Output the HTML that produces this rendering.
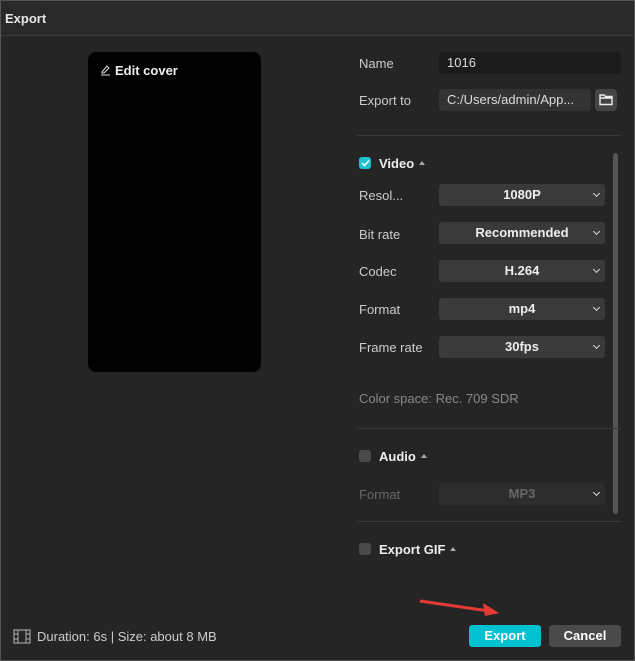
<!DOCTYPE html><html><head><style>
*{box-sizing:border-box;margin:0;padding:0}
body{width:635px;height:661px;background:#252525;font-family:"Liberation Sans",sans-serif;font-size:13px;color:#ddd;position:relative;overflow:hidden}
.a{position:absolute}
.lbl{position:absolute;left:359px;color:#ccc;font-size:13px}
.sel{position:absolute;left:439px;width:166px;height:22px;background:#3a3a3a;border-radius:3px;text-align:center;font-weight:bold;font-size:13px;line-height:22px;color:#eee}
.sel:after{content:"";position:absolute;right:6px;top:7px;width:4px;height:4px;border-right:1.5px solid #ddd;border-bottom:1.5px solid #ddd;transform:rotate(45deg)}
.sep{position:absolute;left:357px;width:264px;height:1px;background:#3a3a3a}
.cb{position:absolute;left:359px;width:12px;height:12px;border-radius:3px;background:#4a4a4a}
.h{position:absolute;left:379px;font-weight:bold;color:#eee;font-size:13px}
.h:after{content:"";display:inline-block;margin-left:5px;vertical-align:3px;border:3.5px solid transparent;border-bottom:4px solid #aaa;border-top:0}
</style></head><body>
<div class="a" style="left:0;top:0;width:635px;height:36px;background:#292929;border-bottom:1px solid #3c3c3c"></div>
<div class="a" style="left:5px;top:11px;font-weight:bold;font-size:13px;color:#e8e8e8">Export</div>
<div class="a" style="left:88px;top:52px;width:173px;height:320px;background:#000;border-radius:8px"></div>
<svg class="a" style="left:100px;top:64px" width="11" height="12" viewBox="0 0 11 12"><path d="M2 8 L7 2 L9 4 L4 9 L2 9Z M1 11 H10" fill="none" stroke="#ddd" stroke-width="1"/></svg>
<div class="a" style="left:115px;top:63px;font-weight:bold;color:#eee">Edit cover</div>
<div class="lbl" style="top:56px">Name</div>
<div class="a" style="left:439px;top:52px;width:182px;height:22px;background:#1b1b1b;border-radius:4px;padding-left:8px;line-height:22px;color:#ddd">1016</div>
<div class="lbl" style="top:93px">Export to</div>
<div class="a" style="left:439px;top:89px;width:152px;height:22px;background:#333;border-radius:4px;padding-left:8px;line-height:22px;color:#ddd;white-space:nowrap;overflow:hidden">C:/Users/admin/App...</div>
<div class="a" style="left:595px;top:89px;width:22px;height:22px;background:#454545;border-radius:4px"></div>
<svg class="a" style="left:599px;top:93px" width="14" height="13" viewBox="0 0 14 13"><path d="M1 2 H5 L6.5 3.5 H13 V11.5 H1Z M1 5 H13" fill="none" stroke="#eee" stroke-width="1.4"/></svg>
<div class="sep" style="top:135px"></div>
<div class="cb" style="top:157px;background:#1fc0d0"></div>
<svg class="a" style="left:361px;top:159px" width="9" height="8"><path d="M1 4 L3.5 6.5 L8 1.5" fill="none" stroke="#fff" stroke-width="1.5"/></svg>
<div class="h" style="top:156px">Video</div>
<div class="a" style="left:613px;top:153px;width:5px;height:361px;background:#555;border-radius:3px"></div>
<div class="lbl" style="top:188px">Resol...</div><div class="sel" style="top:184px">1080P</div>
<div class="lbl" style="top:227px">Bit rate</div><div class="sel" style="top:222px">Recommended</div>
<div class="lbl" style="top:264px">Codec</div><div class="sel" style="top:260px">H.264</div>
<div class="lbl" style="top:302px">Format</div><div class="sel" style="top:298px">mp4</div>
<div class="lbl" style="top:340px">Frame rate</div><div class="sel" style="top:336px">30fps</div>
<div class="lbl" style="top:391px;color:#888">Color space: Rec. 709 SDR</div>
<div class="sep" style="top:428px"></div>
<div class="cb" style="top:450px"></div>
<div class="h" style="top:449px">Audio</div>
<div class="lbl" style="top:487px;color:#666">Format</div><div class="sel" style="top:483px;background:#2d2d2d;color:#666">MP3</div>
<div class="sep" style="top:521px"></div>
<div class="cb" style="top:543px"></div>
<div class="h" style="top:542px">Export GIF</div>
<svg class="a" style="left:419px;top:598px" width="82" height="20"><path d="M1 3 L70 13" stroke="#e53935" stroke-width="3"/><path d="M80 15 L64 5 L66 18Z" fill="#e53935"/></svg>
<svg class="a" style="left:13px;top:629px" width="18" height="15"><rect x="1" y="1" width="16" height="13" fill="none" stroke="#999" stroke-width="1.3"/><path d="M5 1 V14 M13 1 V14 M1 5 H5 M1 10 H5 M13 5 H17 M13 10 H17" stroke="#999" stroke-width="1.2"/></svg>
<div class="a" style="left:37px;top:629px;color:#ccc">Duration: 6s | Size: about 8 MB</div>
<div class="a" style="left:469px;top:625px;width:72px;height:22px;background:#00c1cf;border-radius:3px;text-align:center;line-height:22px;font-weight:bold;color:#fff">Export</div>
<div class="a" style="left:549px;top:625px;width:72px;height:22px;background:#4a4a4a;border-radius:3px;text-align:center;line-height:22px;font-weight:bold;color:#fff">Cancel</div>
<div class="a" style="left:0;top:0;width:635px;height:661px;border:1px solid #555;pointer-events:none"></div>
</body></html>
